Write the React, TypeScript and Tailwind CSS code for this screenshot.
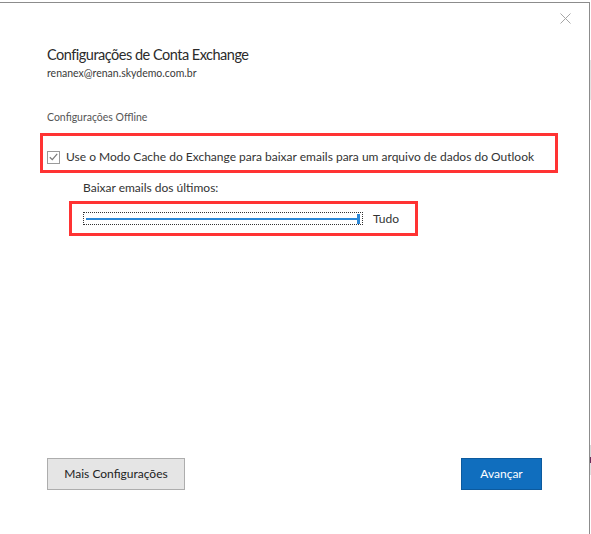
import React from "react";

const font = { fontFamily: 'Lato, "Noto Sans", Arial, sans-serif' };

function CloseIcon() {
  return (
    <svg width="11" height="11" viewBox="0 0 11 11" className="block">
      <path d="M0.5 0.5 L10.5 10.5 M10.5 0.5 L0.5 10.5" stroke="#a6a6a6" strokeWidth="1" fill="none" />
    </svg>
  );
}

function CheckBox() {
  return (
    <div className="w-[13px] h-[13px] border border-[#9a9a9a] bg-white flex items-center justify-center shrink-0">
      <svg width="9" height="8" viewBox="0 0 9 8" className="block">
        <path d="M0.8 4.2 L3.3 6.6 L8.2 0.8" stroke="#7a7a7a" strokeWidth="1.2" fill="none" />
      </svg>
    </div>
  );
}

function Slider() {
  return (
    <div className="w-[280px] h-[13px] border border-dotted border-[#333] flex items-center px-[2px]">
      <div className="flex-1 h-[2px] bg-[#2b88d8]" />
      <div className="w-[3px] h-[10px] bg-[#2b88d8] -ml-[1px]" />
    </div>
  );
}

export default function App() {
  return (
    <div className="w-[591px] h-[534px] bg-white overflow-hidden flex" style={font}>
      <div className="w-[590px] flex flex-col">
        <div className="h-[2px]" />
        <div className="flex-1 border-t border-r border-[#8c8c8c] flex flex-col">
          <div className="flex justify-end pr-[18px] pt-[10px]">
            <CloseIcon />
          </div>

          <div className="pl-[47px] pt-[20px] flex flex-col">
            <div className="text-[14.5px] tracking-[-0.5px] leading-[22px] text-[#2b2b2b]">
              Configurações de Conta Exchange
            </div>
            <div className="text-[10.5px] leading-[14px] text-[#3a3a3a]">renanex@renan.skydemo.com.br</div>
            <div className="text-[10.5px] leading-[16px] text-[#555] mt-[29px]">Configurações Offline</div>
          </div>

          <div className="ml-[40px] mt-[8px] w-[518px] h-[40px] border-[3px] border-[#ff3333] flex items-center pl-[4px] pt-[8px] gap-[6px]">
            <CheckBox />
            <span className="text-[12px] leading-[16px] text-[#333] whitespace-nowrap">
              Use o Modo Cache do Exchange para baixar emails para um arquivo de dados do Outlook
            </span>
          </div>

          <div className="pl-[83px] mt-[7px] text-[12px] leading-[16px] text-[#333]">Baixar emails dos últimos:</div>

          <div className="ml-[69px] mt-[5px] w-[349px] h-[35px] border-[3px] border-[#ff3333] flex items-center pl-[11px] gap-[10px]">
            <Slider />
            <span className="text-[12px] leading-[16px] text-[#333]">Tudo</span>
          </div>

          <div className="flex-1" />

          <div className="flex justify-between pl-[47px] pr-[47px] mb-[44px]">
            <button className="w-[138px] h-[32px] bg-[#e5e5e5] border border-[#adadad] text-[12px] text-[#222]">
              Mais Configurações
            </button>
            <button className="w-[81px] h-[32px] bg-[#106ebe] border border-[#0c5a9e] text-[12px] text-white">
              Avançar
            </button>
          </div>
        </div>
      </div>

      {/* one-pixel strip of the window behind this dialog */}
      <div className="w-[1px] flex flex-col">
        <div className="h-[60px]" />
        <div className="h-[40px] bg-[#e4e4e4]" />
        <div className="h-[345px]" />
        <div className="h-[12px] bg-[#d8d8d8]" />
        <div className="h-[6px] bg-[#6a2a5a]" />
        <div className="h-[12px] bg-[#e0e0e0]" />
      </div>
    </div>
  );
}
